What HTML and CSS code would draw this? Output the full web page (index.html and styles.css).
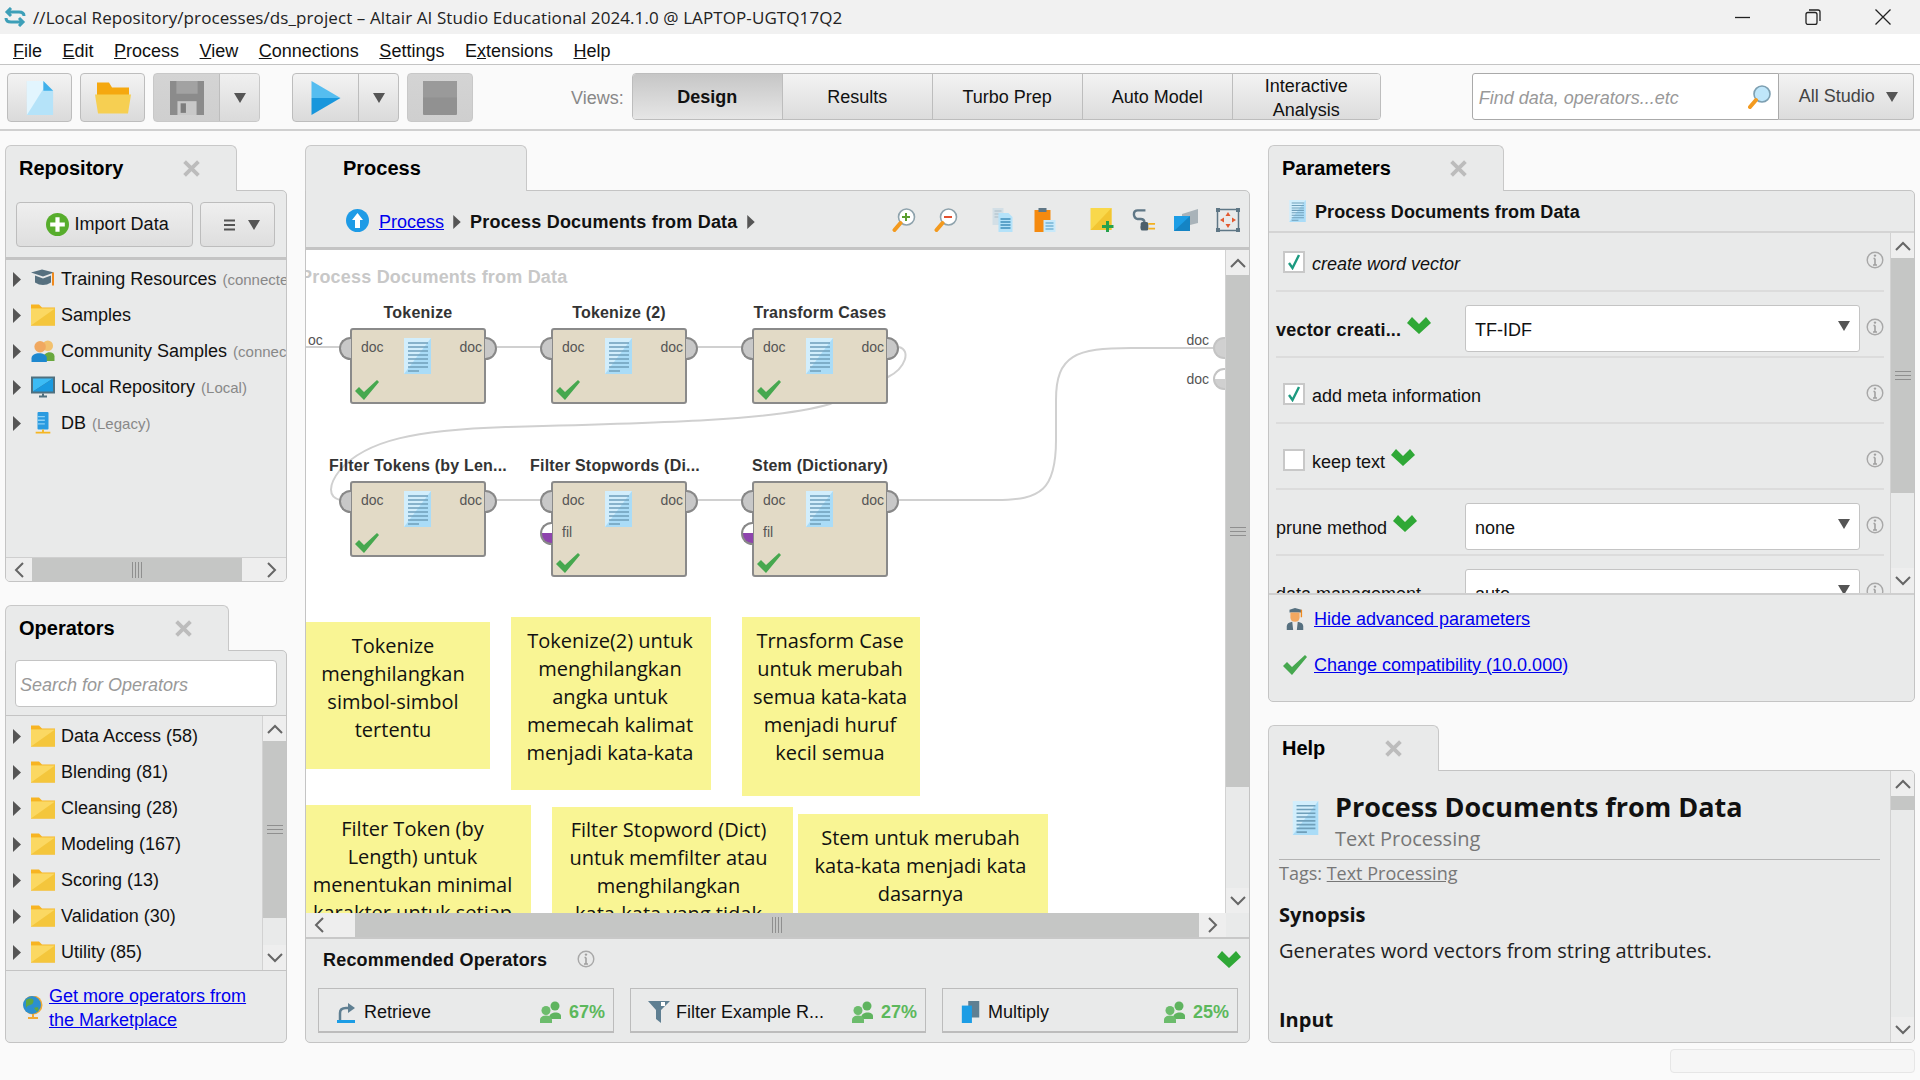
FILE: index.html
```html
<!DOCTYPE html>
<html lang="en">
<head>
  <meta charset="UTF-8">
  <title>Altair AI Studio Educational 2024.1.0</title>
  <link rel="stylesheet" href="styles.css">
</head>
<body>
  <!-- icon sprite -->
  <svg class="sprite" xmlns="http://www.w3.org/2000/svg">
    <symbol id="i-doc" viewBox="0 0 27 36">
      <rect width="27" height="36" fill="#d2eefc"/>
      <polygon points="27,0 27,36 0,36" fill="#aadcf7"/>
      <path d="M4 5H24M4 9H24M4 13H24M4 17H24M4 21H24M4 25H24M4 29H24M4 33H15" stroke="#6f9fba" stroke-width="1.7"/>
    </symbol>
    <symbol id="i-check" viewBox="0 0 24 20">
      <polygon points="0,11 4,7 9,12 22,0 24,2 9,20" fill="#46a84f"/>
    </symbol>
    <symbol id="i-chev" viewBox="0 0 24 17">
      <polygon points="0,6 5,0 12,7 19,0 24,6 12,17" fill="#2fa836"/>
    </symbol>
    <symbol id="i-info" viewBox="0 0 18 18">
      <circle cx="9" cy="9" r="7.8" fill="none" stroke="#a8a8a8" stroke-width="1.4"/>
      <path d="M9 7.5V14M7 14H11M7.5 7.5H9" fill="none" stroke="#a0a0a0" stroke-width="1.6"/>
      <circle cx="9" cy="4.6" r="1.2" fill="#a0a0a0"/>
    </symbol>
    <symbol id="i-close" viewBox="0 0 16 16">
      <path d="M1.500 1.500L14.500 14.500M14.500 1.500L1.500 14.500" stroke="#bcbcbc" stroke-width="3.6"/>
    </symbol>
    <symbol id="i-tri" viewBox="0 0 8 15"><polygon points="0,0 8,7.5 0,15" fill="#555"/></symbol>
    <symbol id="i-caret" viewBox="0 0 12 10"><polygon points="0,0 12,0 6,10" fill="#555"/></symbol>
    <symbol id="i-up" viewBox="0 0 16 10"><path d="M1 9L8 2L15 9" fill="none" stroke="#666" stroke-width="2"/></symbol>
    <symbol id="i-down" viewBox="0 0 16 10"><path d="M1 1L8 8L15 1" fill="none" stroke="#666" stroke-width="2"/></symbol>
    <symbol id="i-left" viewBox="0 0 10 16"><path d="M9 1L2 8L9 15" fill="none" stroke="#666" stroke-width="2"/></symbol>
    <symbol id="i-right" viewBox="0 0 10 16"><path d="M1 1L8 8L1 15" fill="none" stroke="#666" stroke-width="2"/></symbol>
    <symbol id="i-folder" viewBox="0 0 24 21">
      <path d="M0 0H8L11 3H24V21H0Z" fill="#f7b422"/>
      <rect y="4" width="24" height="17" fill="#f4c63c"/>
      <polygon points="0,4 24,4 0,21" fill="#fbd862"/>
    </symbol>
    <symbol id="i-people" viewBox="0 0 21 22">
      <circle cx="15" cy="5" r="4.500" fill="#5fb45f"/>
      <path d="M9 17C9 10 21 10 21 15V18H9Z" fill="#5fb45f"/>
      <circle cx="6" cy="9.500" r="4.500" fill="#6cbc6c"/>
      <path d="M0 22V19C0 13 12 13 12 19V22Z" fill="#6cbc6c"/>
    </symbol>
    <symbol id="i-zoom" viewBox="0 0 23 24">
      <circle cx="14" cy="9" r="8" fill="#fff" stroke="#8fa3ad" stroke-width="1.6"/>
      <path d="M8 15L2 22" stroke="#f39a1f" stroke-width="4" stroke-linecap="round"/>
    </symbol>
  </svg>

  <header class="titlebar">
    <svg class="app-icon" viewBox="0 0 22 20"><path d="M7 1L3 5L7 9M3 5H15Q20 5 20 9M15 11L19 15L15 19M19 15H7Q2 15 2 11" fill="none" stroke="#3d9fb8" stroke-width="3"/></svg>
    <span class="title-text">//Local Repository/processes/ds_project – Altair AI Studio Educational 2024.1.0 @ LAPTOP-UGTQ17Q2</span>
    <div class="win-controls">
      <svg class="win-btn" viewBox="0 0 16 16"><path d="M0 8.500H15" stroke="#222" stroke-width="1.3"/></svg>
      <svg class="win-btn" viewBox="0 0 16 16"><rect x="1" y="3.500" width="11" height="12" rx="2" fill="none" stroke="#222" stroke-width="1.3"/><path d="M4 1H13Q15 1 15 3V12" fill="none" stroke="#222" stroke-width="1.3"/></svg>
      <svg class="win-btn" viewBox="0 0 16 16"><path d="M0.500 0.500L15.500 15.500M15.500 0.500L0.500 15.500" stroke="#222" stroke-width="1.3"/></svg>
    </div>
  </header>

  <nav class="menubar">
    <span><u>F</u>ile</span><span><u>E</u>dit</span><span><u>P</u>rocess</span><span><u>V</u>iew</span><span><u>C</u>onnections</span><span><u>S</u>ettings</span><span>E<u>x</u>tensions</span><span><u>H</u>elp</span>
  </nav>

  <div class="toolbar">
    <button class="tb-btn">
      <svg class="tb-icon" viewBox="0 0 27 35"><path d="M0 0H17L27 10V35H0Z" fill="#b5e3f9"/><polygon points="0,0 17,0 17,8 0,35" fill="#e2f5fe"/><polygon points="17,0 27,10 17,10" fill="#3fb0ea"/></svg>
    </button>
    <button class="tb-btn tb-open">
      <svg class="tb-icon" viewBox="0 0 36 31"><path d="M2 0H14L17 5H34V14H2Z" fill="#f5a80f"/><path d="M0 12H36L33 31H3Z" fill="#f6cf52"/></svg>
    </button>
    <div class="tb-split tb-off tb-save">
      <button class="tb-main">
        <svg class="tb-icon" viewBox="0 0 32 32"><path d="M0 0H32V32H0Z" fill="#8b8b8b"/><rect x="6" y="0" width="20" height="12" fill="#a2a2a2"/><rect x="7" y="19" width="18" height="13" fill="#c8c8c8"/><rect x="10" y="21" width="5" height="9" fill="#7d7d7d"/></svg>
      </button>
      <button class="tb-drop"><svg class="caret" viewBox="0 0 12 10"><use href="#i-caret"/></svg></button>
    </div>
    <div class="tb-split tb-run">
      <button class="tb-main">
        <svg class="tb-icon" viewBox="0 0 29 34"><polygon points="0,0 29,17 0,17" fill="#55bdf0"/><polygon points="0,17 29,17 0,34" fill="#1896dc"/></svg>
      </button>
      <button class="tb-drop"><svg class="caret" viewBox="0 0 12 10"><use href="#i-caret"/></svg></button>
    </div>
    <button class="tb-btn tb-off tb-stop">
      <svg class="tb-icon" viewBox="0 0 33 33"><rect width="33" height="33" rx="1" fill="#919191"/><rect width="33" height="16" fill="#9a9a9a"/></svg>
    </button>
    <span class="views-label">Views:</span>
    <div class="views">
      <button class="view active">Design</button>
      <button class="view">Results</button>
      <button class="view">Turbo Prep</button>
      <button class="view">Auto Model</button>
      <button class="view view-last">Interactive<br>Analysis</button>
    </div>
    <div class="global-search">
      <span class="search-text">Find data, operators...etc</span>
      <svg class="search-icon" viewBox="0 0 23 24"><circle cx="14" cy="9" r="8" fill="#bfe6fa" stroke="#7d9fb1" stroke-width="1.6"/><path d="M8 15L2 22" stroke="#f39a1f" stroke-width="4" stroke-linecap="round"/></svg>
    </div>
    <button class="scope">All Studio<svg class="caret" viewBox="0 0 12 10"><use href="#i-caret"/></svg></button>
  </div>

  <main class="workspace">
    <div class="col">
      <section class="panel panel-repo">
        <div class="tab tab-repo"><b>Repository</b><svg class="tab-x"><use href="#i-close"/></svg></div>
        <div class="panel-body">
          <div class="repo-actions">
            <button class="import-btn">
              <svg class="plus" viewBox="0 0 22 22"><circle cx="11" cy="11" r="11" fill="#57ad2c"/><path d="M11 4V18M4 11H18" stroke="#fff" stroke-width="4"/></svg>
              Import Data
            </button>
            <button class="burger-btn">
              <svg class="burger" viewBox="0 0 11 12"><path d="M0 1.500H11M0 6H11M0 10.500H11" stroke="#555" stroke-width="2"/></svg>
              <svg class="caret" viewBox="0 0 12 10"><use href="#i-caret"/></svg>
            </button>
          </div>
          <ul class="tree tree-repo">
            <li><svg class="tri"><use href="#i-tri"/></svg>
              <svg class="tree-icon" viewBox="0 0 24 21"><path d="M0 4L11 1L23 4L12 8Z" fill="#56707f"/><path d="M4 7V14Q12 19 20 14V7L12 10Z" fill="#56707f"/><path d="M22 4V17" stroke="#f08a1d" stroke-width="2"/></svg>
              <span class="tree-name">Training Resources</span><span class="tree-note">(connected)</span></li>
            <li><svg class="tri"><use href="#i-tri"/></svg><svg class="tree-icon"><use href="#i-folder"/></svg><span class="tree-name">Samples</span></li>
            <li><svg class="tri"><use href="#i-tri"/></svg>
              <svg class="tree-icon" viewBox="0 0 24 23"><circle cx="17" cy="6" r="5.500" fill="#f2c16e"/><path d="M12 20C12 11 24 11 24 17V22H12Z" fill="#69a83e"/><circle cx="9" cy="7" r="6" fill="#f0a860"/><path d="M0 23V19C0 12 16 12 16 19V23Z" fill="#1e88cf"/></svg>
              <span class="tree-name">Community Samples</span><span class="tree-note">(connected)</span></li>
            <li><svg class="tri"><use href="#i-tri"/></svg>
              <svg class="tree-icon" viewBox="0 0 24 21"><rect width="24" height="17" fill="#50707f"/><polygon points="2,2 22,2 2,15" fill="#3cbcf5"/><polygon points="22,2 22,15 2,15" fill="#1a9ae0"/><path d="M8 20H16M12 17V20" stroke="#50707f" stroke-width="2"/></svg>
              <span class="tree-name">Local Repository</span><span class="tree-note">(Local)</span></li>
            <li><svg class="tri"><use href="#i-tri"/></svg>
              <svg class="tree-icon" viewBox="0 0 24 24"><rect x="6" y="0" width="12" height="19" rx="1" fill="#2a9be0"/><path d="M6 5H14M6 9H14M6 13H14" stroke="#8bd0f5" stroke-width="1.500"/><path d="M12 19V22M4 22.500H20" stroke="#f5b623" stroke-width="2"/></svg>
              <span class="tree-name">DB</span><span class="tree-note">(Legacy)</span></li>
          </ul>
          <div class="hscroll hscroll-repo">
            <span class="sb-btn sb-btn-h"><svg class="sb-ic-h"><use href="#i-left"/></svg></span>
            <span class="thumb-h thumb-repo"><i class="grip-v"></i></span>
            <span class="sb-btn sb-btn-h sb-fill"><svg class="sb-ic-h"><use href="#i-right"/></svg></span>
          </div>
        </div>
      </section>

      <section class="panel panel-ops">
        <div class="tab tab-ops"><b>Operators</b><svg class="tab-x"><use href="#i-close"/></svg></div>
        <div class="panel-body">
          <div class="ops-search"><div class="ops-input">Search for Operators</div></div>
          <div class="ops-list">
            <ul class="tree">
              <li><svg class="tri"><use href="#i-tri"/></svg><svg class="tree-icon"><use href="#i-folder"/></svg><span class="tree-name">Data Access (58)</span></li>
              <li><svg class="tri"><use href="#i-tri"/></svg><svg class="tree-icon"><use href="#i-folder"/></svg><span class="tree-name">Blending (81)</span></li>
              <li><svg class="tri"><use href="#i-tri"/></svg><svg class="tree-icon"><use href="#i-folder"/></svg><span class="tree-name">Cleansing (28)</span></li>
              <li><svg class="tri"><use href="#i-tri"/></svg><svg class="tree-icon"><use href="#i-folder"/></svg><span class="tree-name">Modeling (167)</span></li>
              <li><svg class="tri"><use href="#i-tri"/></svg><svg class="tree-icon"><use href="#i-folder"/></svg><span class="tree-name">Scoring (13)</span></li>
              <li><svg class="tri"><use href="#i-tri"/></svg><svg class="tree-icon"><use href="#i-folder"/></svg><span class="tree-name">Validation (30)</span></li>
              <li><svg class="tri"><use href="#i-tri"/></svg><svg class="tree-icon"><use href="#i-folder"/></svg><span class="tree-name">Utility (85)</span></li>
            </ul>
            <div class="vscroll vscroll-ops">
              <span class="sb-btn"><svg class="sb-ic"><use href="#i-up"/></svg></span>
              <span class="thumb thumb-ops"><i class="grip"></i></span>
              <span class="sb-gap"></span>
              <span class="sb-btn"><svg class="sb-ic"><use href="#i-down"/></svg></span>
            </div>
          </div>
          <div class="market">
            <svg class="globe" viewBox="0 0 20 24"><circle cx="10" cy="9" r="9.500" fill="#f3a932"/><circle cx="9" cy="9" r="9" fill="#2c8fd0"/><path d="M3 4C8 1 12 3 10 7C8 10 5 8 3 12ZM11 12C15 10 17 12 14 16Z" fill="#5fa843"/><path d="M5 22H15M10 18V22" stroke="#f3a932" stroke-width="2"/></svg>
            <a class="link" href="#">Get more operators from<br>the Marketplace</a>
          </div>
        </div>
      </section>
    </div>

    <section class="panel panel-process">
      <div class="tab tab-process"><b>Process</b></div>
      <div class="panel-body">
        <div class="crumbs">
          <svg class="up-icon" viewBox="0 0 23 23"><circle cx="11.500" cy="11.500" r="11.500" fill="#1e9be6"/><path d="M11.500 4L17 11H14V19H9V11H6Z" fill="#fff"/></svg>
          <a class="link crumb-text" href="#">Process</a>
          <svg class="tri crumb-text"><use href="#i-tri"/></svg>
          <b class="crumb-text">Process Documents from Data</b>
          <svg class="tri crumb-text"><use href="#i-tri"/></svg>
          <div class="tools">
            <svg class="tool"><use href="#i-zoom"/><path d="M14 5V13M10 9H18" stroke="#5a9e2f" stroke-width="2"/></svg>
            <svg class="tool"><use href="#i-zoom"/><path d="M10 9H18" stroke="#e2502f" stroke-width="2"/></svg>
            <svg class="tool tool-gap2" viewBox="0 0 23 24"><path d="M1 0H12V17H1Z" fill="#d3dfe6"/><path d="M3 3H10M3 6H10M3 9H7" stroke="#a9bcc7" stroke-width="1"/><path d="M7 5H17L21 9V24H7Z" fill="#b4e2f9"/><path d="M9 11H19M9 14H19M9 17H19M9 20H19" stroke="#3f8fbb" stroke-width="1.300"/></svg>
            <svg class="tool" viewBox="0 0 23 24"><rect x="1" y="2" width="16" height="22" fill="#f58a0f"/><rect x="5" y="0" width="8" height="4" fill="#5f7786"/><rect x="10" y="12" width="12" height="12" fill="#c7e9fa"/><path d="M12 15H20M12 18H20M12 21H20" stroke="#4d9ac2" stroke-width="1.200"/></svg>
            <svg class="tool tool-gap2" viewBox="0 0 23 24"><rect width="21" height="22" fill="#f9d84b"/><polygon points="21,0 21,22 0,22" fill="#f2c531"/><path d="M17 13V24M11.500 18.500H23" stroke="#27a24d" stroke-width="3"/></svg>
            <svg class="tool" viewBox="0 0 25 24"><path d="M14 2H6Q2 2 2 6T6 11H9Q13 11 13 15T9 20" fill="none" stroke="#5f7786" stroke-width="2.500"/><rect x="9" y="14" width="8" height="9" rx="2" fill="#4c5f6b"/><path d="M17 16H24M17 21H24" stroke="#f3b01f" stroke-width="2"/></svg>
            <svg class="tool" viewBox="0 0 24 24"><polygon points="8,6 24,1 24,15 8,19" fill="#a9b3b9"/><rect x="0" y="8" width="16" height="15" fill="#1c9de5"/><polygon points="0,23 16,8 16,23" fill="#1584c4"/></svg>
            <svg class="tool" viewBox="0 0 24 24"><rect x="1.500" y="1.500" width="21" height="21" fill="none" stroke="#5f7786" stroke-width="1.500"/><path d="M0 0H4V4H0ZM20 0H24V4H20ZM0 20H4V24H0ZM20 20H24V24H20Z" fill="#5f7786"/><path d="M12 4L9.500 8H14.500ZM12 20L9.500 16H14.500ZM4 12L8 9.500V14.500ZM20 12L16 9.500V14.500Z" fill="#e35a30"/></svg>
          </div>
        </div>
        <div class="canvas-row">
          <div class="canvas">
            <svg class="wires" viewBox="0 0 920 663">
              <path d="M0 97H34M191 97H235M392 97H436M593 97C605 100 600 118 582 127L524 154C470 170 360 173 200 177C110 180 60 190 34 220C22 235 22 247 34 250M191 250H235M392 250H436M593 250H690C735 250 750 240 750 190V150C750 105 770 98 825 98H907" fill="none" stroke="#d0d0d0" stroke-width="2"/>
            </svg>
            <div class="canvas-title">Process Documents from Data</div>
            <span class="edge-doc edge-in">oc</span>
            <span class="edge-doc edge-out1">doc</span>
            <span class="edge-doc edge-out2">doc</span>
            <span class="out-port out1"></span>
            <span class="out-port out2"></span>

            <div class="node n1"><span class="node-label">Tokenize</span><i class="port in"></i><i class="port out"></i><span class="pl pl-l">doc</span><span class="pl pl-r">doc</span><svg class="node-doc"><use href="#i-doc"/></svg><svg class="node-ok"><use href="#i-check"/></svg></div>
            <div class="node n2"><span class="node-label">Tokenize (2)</span><i class="port in"></i><i class="port out"></i><span class="pl pl-l">doc</span><span class="pl pl-r">doc</span><svg class="node-doc"><use href="#i-doc"/></svg><svg class="node-ok"><use href="#i-check"/></svg></div>
            <div class="node n3"><span class="node-label">Transform Cases</span><i class="port in"></i><i class="port out"></i><span class="pl pl-l">doc</span><span class="pl pl-r">doc</span><svg class="node-doc"><use href="#i-doc"/></svg><svg class="node-ok"><use href="#i-check"/></svg></div>
            <div class="node n4"><span class="node-label">Filter Tokens (by Len...</span><i class="port in"></i><i class="port out"></i><span class="pl pl-l">doc</span><span class="pl pl-r">doc</span><svg class="node-doc"><use href="#i-doc"/></svg><svg class="node-ok"><use href="#i-check"/></svg></div>
            <div class="node n5 tall"><span class="node-label">Filter Stopwords (Di...</span><i class="port in"></i><i class="port out"></i><i class="port fil"></i><span class="pl pl-l">doc</span><span class="pl pl-r">doc</span><span class="pl pl-f">fil</span><svg class="node-doc"><use href="#i-doc"/></svg><svg class="node-ok"><use href="#i-check"/></svg></div>
            <div class="node n6 tall"><span class="node-label">Stem (Dictionary)</span><i class="port in"></i><i class="port out"></i><i class="port fil"></i><span class="pl pl-l">doc</span><span class="pl pl-r">doc</span><span class="pl pl-f">fil</span><svg class="node-doc"><use href="#i-doc"/></svg><svg class="node-ok"><use href="#i-check"/></svg></div>

            <div class="note note1">Tokenize<br>menghilangkan<br>simbol-simbol<br>tertentu</div>
            <div class="note note2">Tokenize(2) untuk<br>menghilangkan<br>angka untuk<br>memecah kalimat<br>menjadi kata-kata</div>
            <div class="note note3">Trnasform Case<br>untuk merubah<br>semua kata-kata<br>menjadi huruf<br>kecil semua</div>
            <div class="note note4">Filter Token (by<br>Length) untuk<br>menentukan minimal<br>karakter untuk setiap</div>
            <div class="note note5">Filter Stopword (Dict)<br>untuk memfilter atau<br>menghilangkan<br>kata-kata yang tidak</div>
            <div class="note note6">Stem untuk merubah<br>kata-kata menjadi kata<br>dasarnya</div>
          </div>
          <div class="vscroll vscroll-canvas">
            <span class="sb-btn"><svg class="sb-ic"><use href="#i-up"/></svg></span>
            <span class="thumb thumb-canvas"><i class="grip"></i></span>
            <span class="sb-gap"></span>
            <span class="sb-btn"><svg class="sb-ic"><use href="#i-down"/></svg></span>
          </div>
        </div>
        <div class="hscroll hscroll-canvas">
          <span class="sb-btn sb-btn-h sb-btn-wide"><svg class="sb-ic-h"><use href="#i-left"/></svg></span>
          <span class="thumb-h thumb-canvas-h"><i class="grip-v"></i></span>
          <span class="sb-btn sb-btn-h"><svg class="sb-ic-h"><use href="#i-right"/></svg></span>
        </div>
        <div class="recommended">
          <div class="rec-head">
            <b>Recommended Operators</b>
            <svg class="info rec-info"><use href="#i-info"/></svg>
            <svg class="rec-chev"><use href="#i-chev"/></svg>
          </div>
          <div class="rec-cards">
            <div class="rec-card">
              <svg class="rec-icon" viewBox="0 0 22 22"><path d="M4 19V12Q4 7 10 7H13" fill="none" stroke="#5f7f92" stroke-width="2.500"/><polygon points="12,2 19,7 12,12" fill="#5f7f92"/><rect x="1" y="19" width="18" height="3" fill="#1c9de5"/></svg>
              <span class="rec-name">Retrieve</span>
              <svg class="rec-people"><use href="#i-people"/></svg><span class="rec-pct">67%</span>
            </div>
            <div class="rec-card">
              <svg class="rec-icon" viewBox="0 0 22 22"><polygon points="0,0 22,0 13,9 13,22 8,18 8,9" fill="#5f7f92"/><rect x="13" y="1" width="4" height="4" fill="#fff"/></svg>
              <span class="rec-name">Filter Example R...</span>
              <svg class="rec-people"><use href="#i-people"/></svg><span class="rec-pct">27%</span>
            </div>
            <div class="rec-card">
              <svg class="rec-icon" viewBox="0 0 22 24"><rect x="8" y="0" width="12" height="18" fill="#5f7f92"/><rect x="1" y="5" width="11" height="19" fill="#1c9de5"/></svg>
              <span class="rec-name">Multiply</span>
              <svg class="rec-people"><use href="#i-people"/></svg><span class="rec-pct">25%</span>
            </div>
          </div>
        </div>
      </div>
    </section>

    <div class="col">
      <section class="panel panel-params">
        <div class="tab tab-params"><b>Parameters</b><svg class="tab-x"><use href="#i-close"/></svg></div>
        <div class="panel-body">
          <div class="params-head"><svg class="params-icon"><use href="#i-doc"/></svg><b class="head-text">Process Documents from Data</b></div>
          <div class="params-scroll">
            <div class="params-list">
              <div class="param param-first">
                <div class="param-check"><span class="cbox"><svg viewBox="0 0 14 16"><path d="M2 9L5.500 14L12 1" fill="none" stroke="#1d9a80" stroke-width="2.400"/></svg></span><i class="param-text">create word vector</i></div>
                <svg class="info"><use href="#i-info"/></svg>
              </div>
              <div class="param">
                <span class="param-label"><b class="param-text">vector creati...</b><svg class="param-chev"><use href="#i-chev"/></svg></span>
                <div class="combo"><span class="param-text">TF-IDF</span><svg class="caret"><use href="#i-caret"/></svg></div>
                <svg class="info"><use href="#i-info"/></svg>
              </div>
              <div class="param">
                <div class="param-check"><span class="cbox"><svg viewBox="0 0 14 16"><path d="M2 9L5.500 14L12 1" fill="none" stroke="#1d9a80" stroke-width="2.400"/></svg></span><span class="param-text">add meta information</span></div>
                <svg class="info"><use href="#i-info"/></svg>
              </div>
              <div class="param">
                <div class="param-check"><span class="cbox"></span><span class="param-text">keep text</span><svg class="param-chev"><use href="#i-chev"/></svg></div>
                <svg class="info"><use href="#i-info"/></svg>
              </div>
              <div class="param">
                <span class="param-label"><span class="param-text">prune method</span><svg class="param-chev"><use href="#i-chev"/></svg></span>
                <div class="combo"><span class="param-text">none</span><svg class="caret"><use href="#i-caret"/></svg></div>
                <svg class="info"><use href="#i-info"/></svg>
              </div>
              <div class="param">
                <span class="param-label"><span class="param-text">data management</span></span>
                <div class="combo"><span class="param-text">auto</span><svg class="caret"><use href="#i-caret"/></svg></div>
                <svg class="info"><use href="#i-info"/></svg>
              </div>
            </div>
            <div class="vscroll vscroll-params">
              <span class="sb-btn"><svg class="sb-ic"><use href="#i-up"/></svg></span>
              <span class="thumb thumb-params"><i class="grip"></i></span>
              <span class="sb-gap"></span>
              <span class="sb-btn"><svg class="sb-ic"><use href="#i-down"/></svg></span>
            </div>
          </div>
          <div class="params-links">
            <div class="param-link">
              <svg class="link-icon" viewBox="0 0 22 24"><path d="M5 2L11 0L18 2V5H5Z" fill="#56707f"/><path d="M18 2V10" stroke="#f08a1d" stroke-width="1.500"/><path d="M6 5H16V10Q16 15 11 15T6 10Z" fill="#f2a860"/><path d="M2 24V20Q2 16 8 15L9 24ZM20 24V20Q20 16 14 15L13 24Z" fill="#56707f"/></svg>
              <a class="link" href="#">Hide advanced parameters</a>
            </div>
            <div class="param-link">
              <svg class="link-icon" viewBox="0 0 24 20"><use href="#i-check"/></svg>
              <a class="link" href="#">Change compatibility (10.0.000)</a>
            </div>
          </div>
        </div>
      </section>

      <section class="panel panel-help">
        <div class="tab tab-help"><b>Help</b><svg class="tab-x"><use href="#i-close"/></svg></div>
        <div class="panel-body help-body">
          <div class="help-content">
            <div class="help-head">
              <svg class="help-icon"><use href="#i-doc"/></svg>
              <div>
                <h2>Process Documents from Data</h2>
                <div class="help-sub">Text Processing</div>
              </div>
            </div>
            <hr class="help-hr">
            <div class="help-tags">Tags: <u>Text Processing</u></div>
            <h3 class="help-syn">Synopsis</h3>
            <p class="help-p">Generates word vectors from string attributes.</p>
            <h3 class="help-input">Input</h3>
          </div>
          <div class="vscroll vscroll-help">
            <span class="sb-btn"><svg class="sb-ic"><use href="#i-up"/></svg></span>
            <span class="thumb thumb-help"></span>
            <span class="sb-gap"></span>
            <span class="sb-btn"><svg class="sb-ic"><use href="#i-down"/></svg></span>
          </div>
        </div>
      </section>
    </div>
  </main>

  <footer class="statusbar"><div class="status-box"></div></footer>
</body>
</html>
```

FILE: styles.css
```css
* {
  box-sizing: border-box;
}
html, body {
  margin: 0;
  padding: 0;
}
body {
  width: 1920px;
  height: 1080px;
  overflow: hidden;
  background-color: #fafafa;
  font-family: "Liberation Sans", Arial, sans-serif;
  font-size: 18px;
  color: #111;
}
button {
  font: inherit;
  color: inherit;
  padding: 0;
}
.sprite {
  display: none;
}
.link {
  color: #0000ee;
}

/* title + menu */
.titlebar {
  height: 34px;
  background-color: #f1f1f1;
  display: flex;
  align-items: center;
  padding-left: 4px;
}
.app-icon {
  width: 22px;
  height: 20px;
  margin-right: 7px;
}
.title-text {
  font-family: "Open Sans", sans-serif;
  font-size: 17px;
  letter-spacing: 0.09px;
  color: #222;
}
.win-controls {
  margin-left: auto;
  display: flex;
  gap: 54px;
  padding-right: 29px;
}
.win-btn {
  width: 16px;
  height: 16px;
}
.menubar {
  height: 31px;
  background-color: #fff;
  border-bottom: 1px solid #c4c4c4;
  display: flex;
  align-items: center;
  gap: 20.5px;
  padding: 5px 0 0 13px;
}

/* main toolbar */
.toolbar {
  height: 66px;
  border-bottom: 2px solid #d0d0d0;
  padding: 8px 0 0 7px;
  display: flex;
  align-items: flex-start;
}
.tb-btn, .tb-split {
  height: 49px;
  border: 1px solid #bdbdbd;
  border-radius: 4px;
  background: linear-gradient(#f3f3f3, #dadada);
  display: flex;
  align-items: center;
  justify-content: center;
}
.tb-btn {
  width: 65px;
  margin-right: 8px;
}
.tb-split {
  width: 107px;
  overflow: hidden;
}
.tb-save {
  margin-right: 32px;
}
.tb-run {
  margin-right: 8px;
}
.tb-main {
  width: 66px;
  height: 100%;
  border: 0;
  border-right: 1px solid #bdbdbd;
  background: none;
  display: flex;
  align-items: center;
  justify-content: center;
}
.tb-drop {
  flex: 1;
  height: 100%;
  border: 0;
  background: none;
  display: flex;
  align-items: center;
  justify-content: center;
}
.tb-off {
  background: linear-gradient(#d4d4d4, #cfcfcf);
  border-color: #c8c8c8;
}
.tb-off .tb-main {
  border-color: #bdbdbd;
}
.tb-off .tb-drop {
  background: linear-gradient(#f0f0f0, #dadada);
}
.tb-icon {
  height: 34px;
  width: 36px;
}
.tb-stop {
  width: 66px;
  margin-right: 0;
}
.caret {
  width: 12px;
  height: 10px;
}
.views-label {
  margin: 15px 8px 0 98px;
  color: #888;
}
.views {
  display: flex;
  height: 47px;
  border: 1px solid #bdbdbd;
  border-radius: 4px;
  overflow: hidden;
  width: 749px;
}
.view {
  width: 150px;
  border: 0;
  border-right: 1px solid #bdbdbd;
  background: linear-gradient(#f3f3f3, #dcdcdc);
  line-height: 24px;
}
.view.active {
  font-weight: bold;
  background: linear-gradient(#c6c6c6, #e6e6e6);
}
.view-last {
  width: auto;
  flex: 1;
  border-right: 0;
  padding-bottom: 3px;
}
.global-search {
  margin-left: 91px;
  width: 307px;
  height: 47px;
  border: 1px solid #aaa;
  border-radius: 3px 0 0 3px;
  background-color: #fff;
  display: flex;
  align-items: center;
  padding-left: 6px;
}
.search-text {
  font-style: italic;
  color: #999;
  padding-top: 3px;
}
.search-icon {
  margin-left: auto;
  margin-right: 7px;
  width: 23px;
  height: 24px;
}
.scope {
  width: 135px;
  height: 47px;
  border: 1px solid #bdbdbd;
  border-left: 0;
  border-radius: 0 4px 4px 0;
  background: linear-gradient(#f3f3f3, #dcdcdc);
  color: #444;
  display: flex;
  align-items: center;
  padding-left: 20px;
  gap: 11px;
}

/* panels */
.workspace {
  display: grid;
  grid-template-columns: 282px 945px 647px;
  column-gap: 18px;
  height: 898px;
  margin-top: 14px;
  padding-left: 5px;
}
.col {
  display: flex;
  flex-direction: column;
  gap: 23px;
  min-height: 0;
}
.panel {
  display: flex;
  flex-direction: column;
  min-height: 0;
}
.panel-repo {
  height: 437px;
}
.panel-ops {
  flex: 1;
}
.panel-params {
  height: 557px;
}
.panel-help {
  flex: 1;
}
.tab {
  height: 46px;
  margin-bottom: -1px;
  position: relative;
  z-index: 1;
  background-color: #e9eaea;
  border: 1px solid #c8c8c8;
  border-bottom: 0;
  border-radius: 6px 6px 0 0;
  display: flex;
  align-items: center;
  font-size: 20px;
  padding-left: 13px;
  color: #000;
}
.tab-repo {
  width: 232px;
}
.tab-ops {
  width: 224px;
}
.tab-process {
  width: 222px;
  padding-left: 37px;
}
.tab-params {
  width: 236px;
}
.tab-help {
  width: 171px;
}
.tab-x {
  width: 17px;
  height: 17px;
  position: absolute;
  right: 36px;
  top: 14px;
}
.panel-body {
  flex: 1;
  min-height: 0;
  background-color: #e9eaea;
  border: 1px solid #c4c4c4;
  border-radius: 0 5px 5px 5px;
  display: flex;
  flex-direction: column;
  overflow: hidden;
}

/* repository */
.repo-actions {
  display: flex;
  gap: 7px;
  padding: 11px 11px 11px 10px;
  border-bottom: 3px solid #c4c4c4;
  height: 69px;
}
.import-btn, .burger-btn {
  height: 45px;
  border: 1px solid #bdbdbd;
  border-radius: 4px;
  background: linear-gradient(#efefef, #dedede);
  display: flex;
  align-items: center;
  justify-content: center;
}
.import-btn {
  width: 178px;
  gap: 6px;
  padding-left: 5px;
}
.burger-btn {
  width: 75px;
  gap: 13px;
  padding-left: 8px;
}
.plus {
  width: 23px;
  height: 23px;
}
.burger {
  width: 11px;
  height: 12px;
}
.tree {
  list-style: none;
  margin: 0;
  padding: 1px 0 0;
  flex: 1;
  min-width: 0;
  overflow: hidden;
  white-space: nowrap;
}
.tree li {
  height: 36px;
  display: flex;
  align-items: center;
  padding-left: 7px;
}
.tri {
  width: 8px;
  height: 15px;
  flex: none;
}
.tree-icon {
  width: 24px;
  height: 22px;
  margin: 0 6px 0 10px;
  flex: none;
}
.tree-name {
  flex: none;
}
.tree-note {
  margin-left: 6px;
  min-width: 0;
  overflow: hidden;
  font-size: 15px;
  color: #888;
}
.hscroll {
  display: flex;
  flex: none;
  height: 24px;
}
.hscroll-repo {
  border-top: 1px solid #cfcfcf;
}
.sb-btn {
  height: 25px;
  background-color: #eee;
  display: flex;
  align-items: center;
  justify-content: center;
  flex: none;
}
.sb-btn-h {
  height: auto;
  width: 26px;
}
.sb-btn-wide {
  width: 49px;
  justify-content: flex-start;
  padding-left: 8px;
}
.sb-fill {
  flex: 1;
  justify-content: flex-end;
  padding-right: 9px;
}
.sb-ic {
  width: 16px;
  height: 10px;
}
.sb-ic-h {
  width: 10px;
  height: 16px;
}
.thumb, .thumb-h {
  background-color: #c5c6c5;
  display: flex;
  align-items: center;
  justify-content: center;
  flex: none;
}
.thumb-repo {
  width: 210px;
}
.thumb-canvas-h {
  width: 844px;
}
.grip {
  width: 16px;
  height: 9px;
  background: repeating-linear-gradient(#8f8f8f 0 1px, transparent 1px 4px);
}
.grip-v {
  width: 10px;
  height: 16px;
  background: repeating-linear-gradient(90deg, #8f8f8f 0 1px, transparent 1px 3px);
}
.vscroll {
  width: 24px;
  flex: none;
  display: flex;
  flex-direction: column;
  border-left: 1px solid #d2d2d2;
}
.sb-gap {
  flex: 1;
}

/* operators */
.ops-search {
  height: 65px;
  padding: 9px 9px 0 9px;
  border-bottom: 1px solid #c4c4c4;
}
.ops-input {
  height: 47px;
  background-color: #fff;
  border: 1px solid #c4c4c4;
  border-radius: 4px;
  font-style: italic;
  color: #999;
  display: flex;
  align-items: center;
  padding: 3px 0 0 4px;
}
.ops-list {
  height: 255px;
  display: flex;
  border-bottom: 1px solid #c4c4c4;
}
.ops-list .tree {
  padding-top: 2px;
}
.thumb-ops {
  height: 177px;
}
.market {
  flex: 1;
  display: flex;
  align-items: center;
  padding: 2px 0 0 17px;
  gap: 6px;
  line-height: 24px;
}
.globe {
  width: 20px;
  height: 24px;
}

/* process */
.crumbs {
  height: 59px;
  flex: none;
  border-bottom: 3px solid #c4c4c4;
  display: flex;
  align-items: center;
  padding: 2px 0 0 40px;
}
.crumb-text {
  margin-top: 4px;
}
.crumbs b {
  letter-spacing: 0.2px;
}
.up-icon {
  width: 23px;
  height: 23px;
  margin-right: 10px;
}
.crumbs .tri {
  margin: 4px 9px 0;
  height: 14px;
}
.tools {
  margin-left: auto;
  margin-right: 9px;
  display: flex;
  gap: 18px;
}
.tool {
  width: 24px;
  height: 24px;
}
.tool-gap2 {
  margin-left: 15px;
}
.canvas-row {
  display: flex;
  height: 663px;
  flex: none;
}
.canvas {
  position: relative;
  width: 920px;
  background-color: #fff;
  overflow: hidden;
}
.wires {
  position: absolute;
  left: 0;
  top: 0;
  width: 920px;
  height: 663px;
}
.canvas-title {
  position: absolute;
  left: -6px;
  top: 17px;
  font-weight: bold;
  letter-spacing: 0.2px;
  color: #c8c8c8;
}
.edge-doc {
  position: absolute;
  font-size: 14px;
  color: #555;
}
.edge-in {
  left: 2px;
  top: 82px;
}
.edge-out1 {
  right: 16px;
  top: 82px;
}
.edge-out2 {
  right: 16px;
  top: 121px;
}
.out-port {
  position: absolute;
  left: 907px;
  width: 13px;
  height: 22px;
  border: 2px solid #c4c4c4;
  border-right: 0;
  border-radius: 11px 0 0 11px;
  background-color: #d0d0d0;
}
.out1 {
  top: 87px;
}
.out2 {
  top: 118px;
  background: linear-gradient(#fff 50%, #d0d0d0 50%);
}
.node {
  position: absolute;
  width: 136px;
  height: 76px;
  background-color: #e2dac6;
  border: 2px solid #8a8a8a;
  border-radius: 3px;
}
.node.tall {
  height: 96px;
}
.n1 { left: 44px; top: 78px; }
.n2 { left: 245px; top: 78px; }
.n3 { left: 446px; top: 78px; }
.n4 { left: 44px; top: 231px; }
.n5 { left: 245px; top: 231px; }
.n6 { left: 446px; top: 231px; }
.node-label {
  position: absolute;
  left: 50%;
  bottom: 100%;
  margin-bottom: 8px;
  transform: translateX(-50%);
  white-space: nowrap;
  font-size: 16px;
  font-weight: bold;
  letter-spacing: 0.2px;
  color: #333;
}
.n5 .node-label {
  margin-left: -4px;
}
.port {
  position: absolute;
  width: 12px;
  height: 23px;
  top: 7px;
  background-color: #c8c8c8;
  border: 2px solid #888;
}
.port.in, .port.fil {
  left: -13px;
  border-right: 0;
  border-radius: 12px 0 0 12px;
}
.port.out {
  right: -13px;
  border-left: 0;
  border-radius: 0 12px 12px 0;
}
.port.fil {
  top: 39px;
  background: linear-gradient(#fff 50%, #8e44ad 50%);
}
.pl {
  position: absolute;
  top: 9px;
  font-size: 14px;
  color: #555;
}
.pl-l, .pl-f {
  left: 9px;
}
.pl-r {
  right: 2px;
}
.pl-f {
  top: 41px;
}
.node-doc {
  position: absolute;
  left: 52px;
  top: 8px;
  width: 27px;
  height: 36px;
}
.node-ok {
  position: absolute;
  left: 3px;
  top: 50px;
  width: 24px;
  height: 20px;
}
.tall .node-ok {
  top: 70px;
}
.note {
  position: absolute;
  background-color: #f9f594;
  font-family: "Open Sans", sans-serif;
  font-size: 20px;
  line-height: 28px;
  text-align: center;
  color: #111;
  white-space: nowrap;
}
.note1 { left: 0; top: 372px; width: 184px; height: 147px; padding: 10px 10px 0 0; }
.note2 { left: 205px; top: 367px; width: 200px; height: 173px; padding: 10px 2px 0 0; }
.note3 { left: 436px; top: 367px; width: 178px; height: 179px; padding: 10px 2px 0 0; }
.note4 { left: 0; top: 555px; width: 225px; height: 140px; padding: 10px 12px 0 0; }
.note5 { left: 246px; top: 557px; width: 241px; height: 140px; padding: 9px 8px 0 0; }
.note6 { left: 492px; top: 564px; width: 250px; height: 120px; padding: 10px 5px 0 0; }
.thumb-canvas {
  height: 512px;
}
.hscroll-canvas .sb-btn-h:last-child {
  width: 27px;
}
.recommended {
  flex: 1;
  border-top: 2px solid #c8c8c8;
  padding: 0 11px 0 12px;
}
.rec-head {
  height: 43px;
  margin-bottom: 6px;
  display: flex;
  align-items: center;
  padding-left: 5px;
}
.rec-head b {
  letter-spacing: 0.2px;
}
.info {
  width: 18px;
  height: 18px;
  flex: none;
}
.rec-info {
  margin: -3px 0 0 30px;
}
.rec-chev {
  width: 24px;
  height: 17px;
  margin-left: auto;
  margin-right: -3px;
  margin-top: -3px;
}
.rec-cards {
  display: flex;
  gap: 16px;
}
.rec-card {
  width: 296px;
  height: 45px;
  border: 1px solid #bcbcbc;
  border-bottom-width: 2px;
  display: flex;
  align-items: center;
  padding: 4px 8px 0 17px;
}
.rec-icon {
  width: 22px;
  height: 22px;
  margin-right: 6px;
  flex: none;
}
.rec-people {
  width: 21px;
  height: 22px;
  margin-left: auto;
  margin-right: 8px;
}
.rec-pct {
  font-weight: bold;
  color: #5cb85c;
}

/* parameters */
.params-head {
  height: 42px;
  flex: none;
  border-bottom: 2px solid #d4d4d4;
  display: flex;
  align-items: center;
  padding-left: 20px;
}
.head-text {
  padding-top: 3px;
  letter-spacing: 0.1px;
}
.params-icon {
  width: 17px;
  height: 22px;
  margin-right: 9px;
}
.params-scroll {
  height: 362px;
  flex: none;
  display: flex;
  border-bottom: 2px solid #cfcfcf;
  overflow: hidden;
}
.params-list {
  flex: 1;
  padding: 0 6px 0 7px;
  overflow: hidden;
}
.param {
  display: grid;
  grid-template-columns: 189px 395px 1fr;
  align-items: center;
  height: 66px;
  padding-top: 8px;
  border-bottom: 2px solid #dcdcdc;
}
.param-first {
  height: 59px;
  padding-top: 0;
}
.param .info {
  justify-self: end;
  grid-column: 3;
  margin-top: -3px;
}
.param-check {
  grid-column: 1 / span 2;
  display: flex;
  align-items: center;
  padding-left: 7px;
}
.param-text {
  padding-top: 5px;
}
b.param-text {
  letter-spacing: 0.2px;
}
.cbox {
  width: 22px;
  height: 22px;
  background-color: #fff;
  border: 2px solid #c8c8c8;
  margin-right: 7px;
  display: flex;
  align-items: center;
  justify-content: center;
}
.cbox svg {
  width: 14px;
  height: 16px;
}
.param-label {
  display: flex;
  align-items: center;
}
.param-chev {
  width: 24px;
  height: 17px;
  margin-left: 6px;
  margin-top: -5px;
}
.combo {
  height: 47px;
  background-color: #fff;
  border: 1px solid #c4c4c4;
  border-radius: 3px;
  display: flex;
  align-items: center;
  padding-left: 9px;
}
.combo .caret {
  margin-left: auto;
  margin-right: 9px;
  margin-top: -4px;
}
.thumb-params {
  height: 235px;
}
.vscroll-params, .vscroll-help {
  height: 100%;
}
.params-links {
  flex: 1;
  padding: 1px 0 0 14px;
}
.param-link {
  height: 46px;
  display: flex;
  align-items: center;
  gap: 7px;
}
.link-icon {
  width: 24px;
  height: 22px;
}

/* help */
.help-body {
  flex-direction: row;
}
.help-content {
  flex: 1;
  min-width: 0;
  padding: 0 10px;
  font-family: "Open Sans", sans-serif;
  color: #222;
  overflow: hidden;
}
.help-head {
  display: flex;
  padding-top: 19px;
}
.help-icon {
  width: 27px;
  height: 34px;
  margin: 11px 16px 0 13px;
  flex: none;
}
.help-head h2 {
  margin: 0;
  font-size: 27px;
  line-height: 33px;
  font-weight: bold;
  color: #111;
}
.help-sub {
  line-height: 32px;
  font-size: 20px;
  color: #777;
}
.help-hr {
  margin: 4px 0 0;
  border: 0;
  border-top: 1px solid #b4b4b4;
}
.help-tags {
  line-height: 26px;
  color: #777;
}
.help-content h3 {
  margin: 0;
  font-size: 20px;
  line-height: 30px;
  font-weight: bold;
  color: #111;
}
.help-content .help-syn {
  margin-top: 14px;
}
.help-p {
  margin: 6px 0 0;
  line-height: 30px;
  font-size: 20px;
}
.help-content .help-input {
  margin-top: 39px;
}
.thumb-help {
  height: 14px;
}

.statusbar {
  display: flex;
  justify-content: flex-end;
  padding: 6px 5px 0 0;
}
.status-box {
  width: 245px;
  height: 24px;
  border: 1px solid #e6e6e6;
  border-radius: 4px;
  background-color: #f6f6f6;
}
```
